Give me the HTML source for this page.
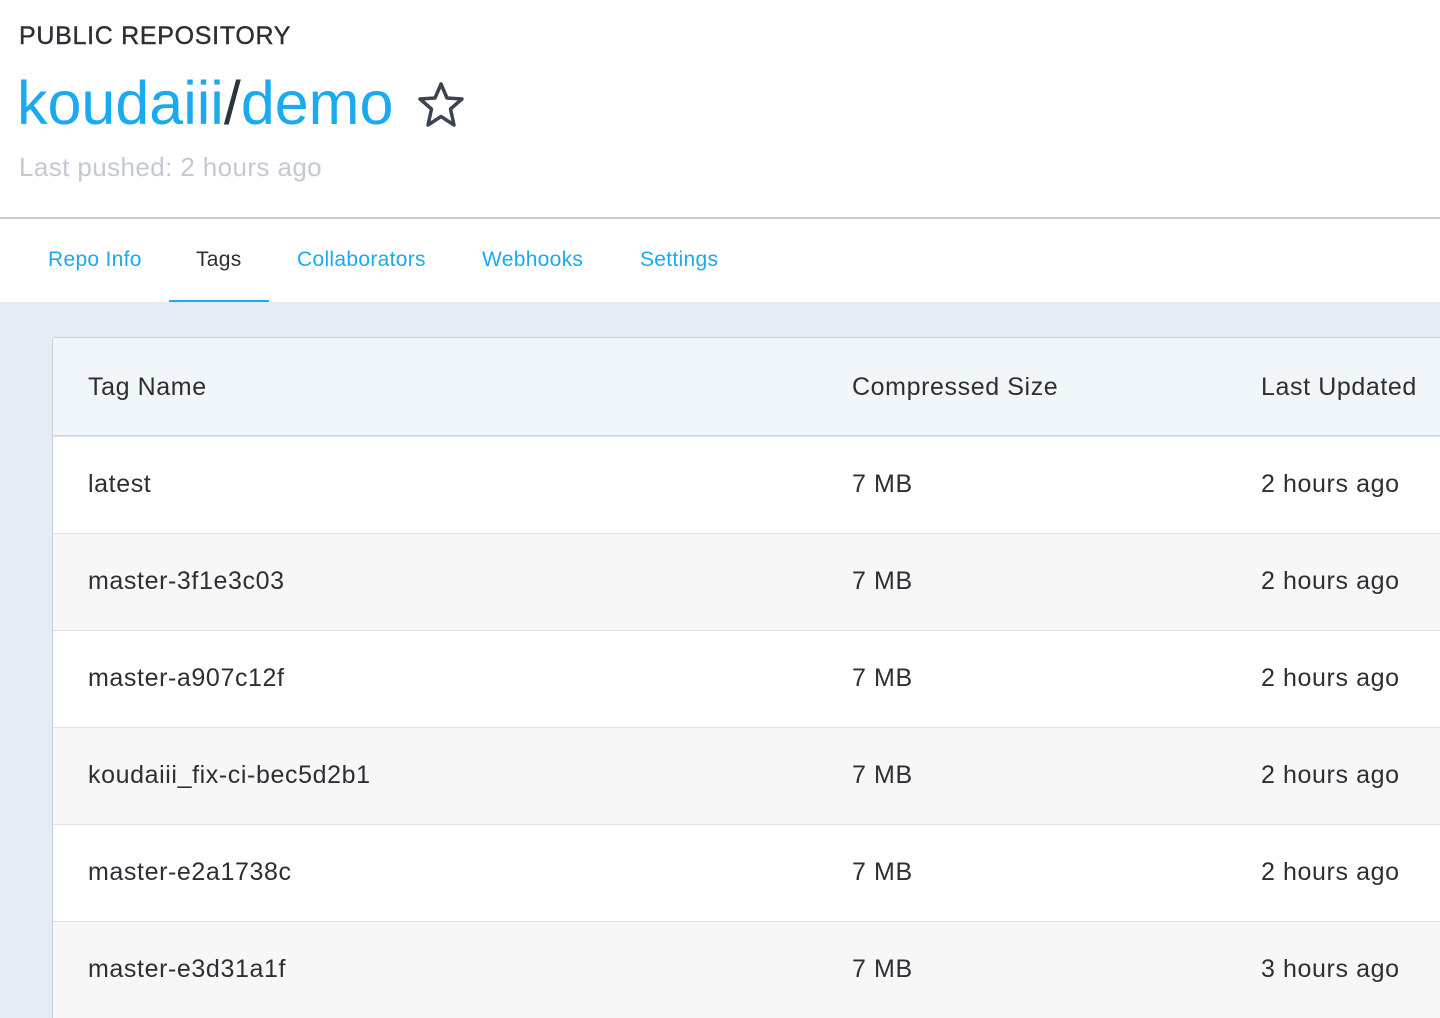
<!DOCTYPE html><html><head><style>
body{margin:0;width:1440px;height:993px;overflow:hidden;background:#e5ebf3;font-family:"Liberation Sans",Arial,sans-serif}
.top{background:#fff;height:217px;position:relative;border-bottom:2px solid #c8ccd1}
.pub{position:absolute;left:19px;top:22px;font-size:25px;color:#2c2f33;letter-spacing:0.7px;-webkit-text-stroke:0.4px #2c2f33}
.title{position:absolute;left:17px;top:68px;font-size:61px;color:#1aaaf0;letter-spacing:0px}
.title span{color:#2a3440}
.star{position:absolute;left:416px;top:80px}
.last{position:absolute;left:19px;top:152px;font-size:26px;color:#c3c8d2;letter-spacing:0.4px}
.tabs{background:#fff;height:83px;position:relative}
.tab{position:absolute;top:29px;font-size:21px;color:#1aaaf0;letter-spacing:0.3px}
.ul{position:absolute;left:169px;top:81px;width:100px;height:2px;background:#1aaaf0}
.tbl{position:absolute;left:52px;top:337px;width:1400px;border:1px solid #c8d1dc;border-right:none;border-bottom:none;border-radius:4px 0 0 0;background:#fff}
.row{height:96px;border-top:1px solid #e1e3e6;position:relative;font-size:25px;color:#2c2f33;letter-spacing:0.6px}
.row div{position:absolute;top:33px}
.hd{height:97px;background:#f1f6fb;border-top:none;border-bottom:1px solid #c8d1dc}
.alt{background:#f7f7f8}
</style></head><body>
<div class="top">
<div class="pub">PUBLIC REPOSITORY</div>
<div class="title">koudaiii<span>/</span>demo</div>
<svg class="star" width="50" height="50" viewBox="0 0 50 50"><polygon points="25,4 31,18 46,19 34.5,29 38,45 25,36.5 12,45 15.5,29 4,19 19,18" fill="none" stroke="#3b4450" stroke-width="3.5" stroke-linejoin="round"/></svg>
<div class="last">Last pushed: 2 hours ago</div>
</div>
<div class="tabs">
<div class="tab" style="left:48px">Repo Info</div>
<div class="tab" style="left:196px;color:#2c2f33">Tags</div>
<div class="tab" style="left:297px">Collaborators</div>
<div class="tab" style="left:482px">Webhooks</div>
<div class="tab" style="left:640px">Settings</div>
<div class="ul"></div>
</div>
<div class="tbl">
<div class="row hd"><div style="left:35px;top:35px">Tag Name</div><div style="left:799px;top:35px">Compressed Size</div><div style="left:1208px;top:35px">Last Updated</div></div>
<div class="row"><div style="left:35px">latest</div><div style="left:799px">7 MB</div><div style="left:1208px">2 hours ago</div></div>
<div class="row alt"><div style="left:35px">master-3f1e3c03</div><div style="left:799px">7 MB</div><div style="left:1208px">2 hours ago</div></div>
<div class="row"><div style="left:35px">master-a907c12f</div><div style="left:799px">7 MB</div><div style="left:1208px">2 hours ago</div></div>
<div class="row alt"><div style="left:35px">koudaiii_fix-ci-bec5d2b1</div><div style="left:799px">7 MB</div><div style="left:1208px">2 hours ago</div></div>
<div class="row"><div style="left:35px">master-e2a1738c</div><div style="left:799px">7 MB</div><div style="left:1208px">2 hours ago</div></div>
<div class="row alt"><div style="left:35px">master-e3d31a1f</div><div style="left:799px">7 MB</div><div style="left:1208px">3 hours ago</div></div>
</div>
</body></html>
